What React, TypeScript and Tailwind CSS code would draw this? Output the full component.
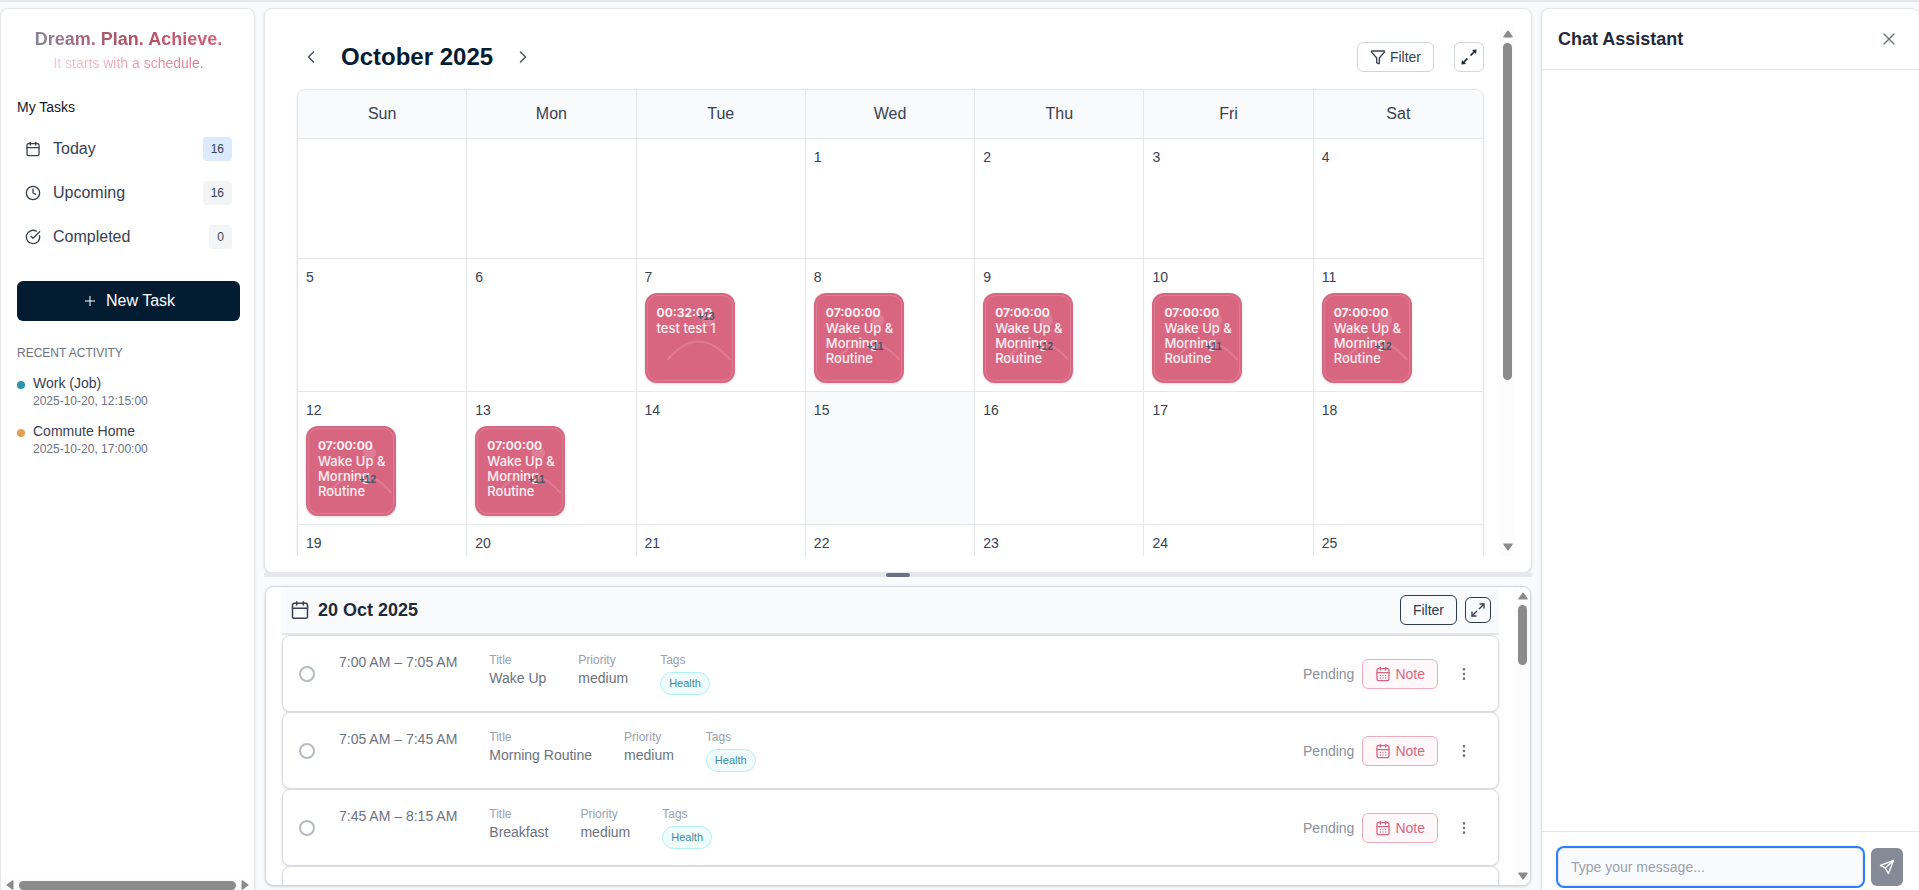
import { useState } from "react";
import {
    Calendar,
    CalendarDays,
    ChevronLeft,
    ChevronRight,
    CircleCheckBig,
    Clock,
    EllipsisVertical,
    Funnel,
    Plus,
    X,
} from "lucide-react";
import { AiOutlineExpandAlt } from "react-icons/ai";
import { FiMaximize2 } from "react-icons/fi";

const weekDays = ["Sun", "Mon", "Tue", "Wed", "Thu", "Fri", "Sat"];

const weeks: (number | null)[][] = [
    [null, null, null, 1, 2, 3, 4],
    [5, 6, 7, 8, 9, 10, 11],
    [12, 13, 14, 15, 16, 17, 18],
    [19, 20, 21, 22, 23, 24, 25],
    [26, 27, 28, 29, 30, 31, null],
];

type DayEvent = { time: string; title: string; more: string };

const routine = (more: string): DayEvent => ({
    time: "07:00:00",
    title: "Wake Up & Morning Routine",
    more,
});

const events: Record<number, DayEvent> = {
    7: { time: "00:32:00", title: "test test 1", more: "+13" },
    8: routine("+11"),
    9: routine("+12"),
    10: routine("+11"),
    11: routine("+12"),
    12: routine("+12"),
    13: routine("+11"),
};

const today = 15;

const tasks = [
    { time: "7:00 AM – 7:05 AM", title: "Wake Up", priority: "medium", tag: "Health" },
    { time: "7:05 AM – 7:45 AM", title: "Morning Routine", priority: "medium", tag: "Health" },
    { time: "7:45 AM – 8:15 AM", title: "Breakfast", priority: "medium", tag: "Health" },
    { time: "8:15 AM – 9:00 AM", title: "Commute", priority: "medium", tag: "Work" },
];

const menu = [
    { label: "Today", count: 16, icon: Calendar, active: true },
    { label: "Upcoming", count: 16, icon: Clock, active: false },
    { label: "Completed", count: 0, icon: CircleCheckBig, active: false },
];

const activity = [
    { title: "Work (Job)", date: "2025-10-20, 12:15:00", dot: "bg-[#2d93b0]" },
    { title: "Commute Home", date: "2025-10-20, 17:00:00", dot: "bg-[#e5a050]" },
];

function Arrow({ className }: { className?: string }) {
    return (
        <svg viewBox="0 0 10 8" className={`h-2 w-2.5 shrink-0 fill-[#8b8b8b] ${className ?? ""}`} aria-hidden="true">
            <path d="M4.2 1 Q5 0 5.8 1 L9.5 6.2 Q10 7.5 9 7.5 H1 Q0 7.5 .5 6.2 Z" />
        </svg>
    );
}

function VerticalScrollbar({ thumb }: { thumb: string }) {
    return (
        <div className="flex w-[15px] shrink-0 flex-col items-center gap-[5px] bg-[#fcfcfc] py-[5px]">
            <Arrow />
            <div className="w-full flex-1">
                <div className={`mx-auto w-[9px] rounded-full bg-[#8b8b8b] ${thumb}`} />
            </div>
            <Arrow className="rotate-180" />
        </div>
    );
}

function Sidebar() {
    return (
        <aside className="flex w-[255px] shrink-0 flex-col overflow-hidden rounded-t-lg border border-b-0 border-gray-200 bg-white shadow-sm">
            <div className="flex-1 pl-4 pr-[14px]">
                <div className="pt-4 text-center">
                    <h2 className="bg-linear-to-r from-[#7f8ba0] via-[#b04e63] to-[#dc6580] bg-clip-text text-lg font-bold text-transparent">
                        Dream. Plan. Achieve.
                    </h2>
                    <p className="bg-linear-to-r from-[#fadfe5] to-[#d4607a] bg-clip-text text-sm text-transparent">
                        It starts with a schedule.
                    </p>
                </div>

                <h3 className="mt-6 text-sm text-slate-900">My Tasks</h3>
                <nav className="mt-3 flex flex-col gap-1">
                    {menu.map(({ label, count, icon: Icon, active }) => (
                        <a key={label} href="#" className="flex h-10 items-center gap-3 rounded-md px-2 text-[#374151]">
                            <Icon size={16} />
                            <span className="flex-1">{label}</span>
                            <span className={`rounded px-2 py-1 text-xs ${active ? "bg-blue-100" : "bg-gray-100"}`}>
                                {count}
                            </span>
                        </a>
                    ))}
                </nav>

                <button className="mt-6 flex h-10 w-full items-center justify-center gap-2 rounded-md bg-[#041c32] text-white">
                    <Plus size={16} strokeWidth={1.5} />
                    New Task
                </button>

                <h3 className="mt-6 text-xs uppercase text-[#6b7280]">Recent Activity</h3>
                <ul className="mt-3 flex flex-col gap-3">
                    {activity.map((item) => (
                        <li key={item.title} className="flex gap-2">
                            <span className={`mt-2 size-2 shrink-0 rounded-full ${item.dot}`} />
                            <div>
                                <p className="text-sm text-[#374151]">{item.title}</p>
                                <p className="text-xs text-[#6b7280]">{item.date}</p>
                            </div>
                        </li>
                    ))}
                </ul>
            </div>

            <div className="flex h-[11px] items-center gap-1 bg-[#fcfcfc] px-1">
                <Arrow className="-rotate-90" />
                <div className="mt-[2px] h-[9px] flex-1 rounded-full bg-[#8b8b8b]" />
                <Arrow className="rotate-90" />
            </div>
        </aside>
    );
}

function EventCard({ event }: { event: DayEvent }) {
    const short = event.title.length < 12;

    return (
        <div className="relative mt-[6px] size-[90px] rounded-xl bg-[#d96680] py-3 pr-2 pl-3 font-['Inter',sans-serif] text-white/90 shadow-sm">
            <svg viewBox="0 0 90 90" className="absolute inset-0 size-full" fill="none" stroke="#fff" aria-hidden="true">
                <rect x="2.5" y="2.5" width="85" height="85" rx="10" strokeOpacity=".15" />
                <circle cx="63.5" cy="27" r="6.5" fill="#fff" fillOpacity=".15" stroke="none" />
                <path d="M22.5 67Q53 30 85.5 67" strokeOpacity=".15" strokeWidth="2" />
            </svg>
            <p className="text-xs font-bold">{event.time}</p>
            <p className="text-[13px] leading-[15px] font-medium">{event.title}</p>
            <span
                className={`absolute left-[53px] font-['Liberation_Sans',Arial,sans-serif] text-[10px] leading-3 font-bold text-[#475569] ${short ? "top-[18px]" : "top-12"
                    }`}
            >
                {event.more}
            </span>
        </div>
    );
}

function CalendarPanel() {
    return (
        <section className="flex min-h-0 rounded-lg border border-gray-200 bg-white p-4 shadow-sm">
            <div className="min-w-0 flex-1 overflow-hidden px-4 pt-4">
                <header className="mb-4 flex h-8 items-center gap-4">
                    <button aria-label="Previous month" className="p-1 text-[#4b5563]">
                        <ChevronLeft size={20} strokeWidth={1.8} />
                    </button>
                    <h1 className="text-2xl font-bold text-[#041c32]">October 2025</h1>
                    <button aria-label="Next month" className="p-1 text-[#4b5563]">
                        <ChevronRight size={20} strokeWidth={1.8} />
                    </button>
                    <div className="ml-auto flex items-center gap-5">
                        <button className="flex h-[30px] items-center gap-1 rounded-md border border-gray-300 px-3 text-sm text-[#374151]">
                            <Funnel size={16} />
                            Filter
                        </button>
                        <button
                            aria-label="Expand calendar"
                            className="flex size-[30px] items-center justify-center rounded-md border border-gray-300 text-[#1f2937]"
                        >
                            <AiOutlineExpandAlt size={22} />
                        </button>
                    </div>
                </header>

                <div className="overflow-hidden rounded-lg border border-gray-200 shadow-sm">
                    <table className="w-full table-fixed border-separate border-spacing-0">
                        <thead>
                            <tr>
                                {weekDays.map((day) => (
                                    <th
                                        key={day}
                                        className="h-[49px] border-r border-b border-gray-200 bg-[#f9fafb] font-normal text-[#374151] last:border-r-0"
                                    >
                                        {day}
                                    </th>
                                ))}
                            </tr>
                        </thead>
                        <tbody>
                            {weeks.map((week, i) => (
                                <tr key={i}>
                                    {week.map((day, j) => (
                                        <td
                                            key={j}
                                            className={`h-[120px] border-r border-b border-gray-200 p-2 align-top text-sm text-[#374151] last:border-r-0 ${day === today ? "bg-[#f9fafb]" : ""
                                                }`}
                                        >
                                            {day}
                                            {day && events[day] && <EventCard event={events[day]} />}
                                        </td>
                                    ))}
                                </tr>
                            ))}
                        </tbody>
                    </table>
                </div>
            </div>
            <VerticalScrollbar thumb="h-[68%]" />
        </section>
    );
}

function TaskRow({ task }: { task: (typeof tasks)[number] }) {
    return (
        <li className="flex items-center rounded-lg border border-[#d9dce1] bg-white p-4 shadow-sm">
            <input
                type="radio"
                aria-label={`Mark ${task.title} as done`}
                className="size-4 shrink-0 appearance-none rounded-full border-2 border-[#b5bac4]"
            />
            <div className="ml-6 flex gap-8 self-start text-sm text-[#6b7280]">
                <span>{task.time}</span>
                <div>
                    <p className="text-xs text-gray-400">Title</p>
                    <p>{task.title}</p>
                </div>
                <div>
                    <p className="text-xs text-gray-400">Priority</p>
                    <p>{task.priority}</p>
                </div>
                <div>
                    <p className="text-xs text-gray-400">Tags</p>
                    <p className="mt-1 rounded-full border border-[#b2f1f3] bg-[#f0fbfc] px-2 py-0.5 text-[11px] leading-[17px] text-[#3a8ba2]">
                        {task.tag}
                    </p>
                </div>
            </div>
            <div className="ml-auto flex items-center gap-2 text-sm">
                <span className="text-[#8b919c]">Pending</span>
                <button className="flex h-[30px] items-center gap-1 rounded-md border border-[#efabba] bg-[#fef8fa] px-3 text-[#d96680]">
                    <CalendarDays size={16} />
                    Note
                </button>
                <button aria-label="More actions" className="flex w-9 justify-center text-[#6b7280]">
                    <EllipsisVertical size={16} />
                </button>
            </div>
        </li>
    );
}

function TaskPanel() {
    return (
        <section className="mx-px mt-[9px] mb-1 flex min-h-0 overflow-hidden rounded-lg border border-gray-300 bg-white shadow-sm">
            <div className="min-w-0 flex-1 px-4">
                <header className="flex h-12 items-center gap-2 border-b-2 border-gray-200 bg-[#f9fafb] px-2 text-[#374151]">
                    <Calendar size={20} strokeWidth={1.8} />
                    <h2 className="flex-1 text-lg font-bold text-[#1f2937]">20 Oct 2025</h2>
                    <button className="h-[30px] rounded-md border border-[#2d3a52] px-3 text-sm text-[#2d3a52]">Filter</button>
                    <button
                        aria-label="Expand tasks"
                        className="flex size-[26px] items-center justify-center rounded-md border border-[#2d3a52]"
                    >
                        <FiMaximize2 size={16} />
                    </button>
                </header>
                <ul>
                    {tasks.map((task) => (
                        <TaskRow key={task.time} task={task} />
                    ))}
                </ul>
            </div>
            <VerticalScrollbar thumb="h-[23%]" />
        </section>
    );
}

function ChatPanel() {
    const [message, setMessage] = useState("");

    return (
        <aside className="flex w-[378px] shrink-0 flex-col rounded-t-lg border border-r-0 border-b-0 border-gray-200 bg-white shadow-sm">
            <header className="flex h-[61px] items-center justify-between border-b border-gray-200 px-4">
                <h2 className="text-lg font-bold text-[#1f2937]">Chat Assistant</h2>
                <button aria-label="Close chat" className="p-1 text-[#6b7280]">
                    <X size={20} strokeWidth={1.6} />
                </button>
            </header>
            <div className="flex-1" />
            <form
                className="flex gap-2 border-t border-gray-200 px-4 pt-4 pb-1"
                onSubmit={(e) => {
                    e.preventDefault();
                    setMessage("");
                }}
            >
                <input
                    type="text"
                    aria-label="Message"
                    placeholder="Type your message..."
                    value={message}
                    onChange={(e) => setMessage(e.target.value)}
                    className="h-[38px] min-w-0 flex-1 rounded-md border border-gray-200 bg-[#f9fafb] px-3 text-sm ring-2 ring-[#2b7fff] outline-none placeholder:text-gray-400"
                />
                <button aria-label="Send" className="flex w-8 items-center justify-center rounded-md bg-[#848b97] text-white">
                    <svg viewBox="0 0 16 16" className="size-4" fill="none" stroke="currentColor" strokeWidth="1.4" strokeLinejoin="round" aria-hidden="true">
                        <path d="M14.5 1.5 1.5 6.3 6.2 9 9.4 14.5Z" />
                        <path d="M14.5 1.5 6.2 9" />
                    </svg>
                </button>
            </form>
        </aside>
    );
}

export default function App() {
    return (
        <div className="flex h-screen gap-[9px] overflow-hidden border-t-2 border-gray-200 bg-[#f9fafb] pt-[6px] font-['Liberation_Sans',Arial,sans-serif]">
            <Sidebar />
            <main className="grid min-w-0 flex-1 grid-rows-[minmax(0,565fr)_4px_minmax(0,313fr)]">
                <CalendarPanel />
                <div className="flex justify-center bg-gray-200">
                    <div className="w-6 rounded-sm bg-[#6b7285]" />
                </div>
                <TaskPanel />
            </main>
            <ChatPanel />
        </div>
    );
}
